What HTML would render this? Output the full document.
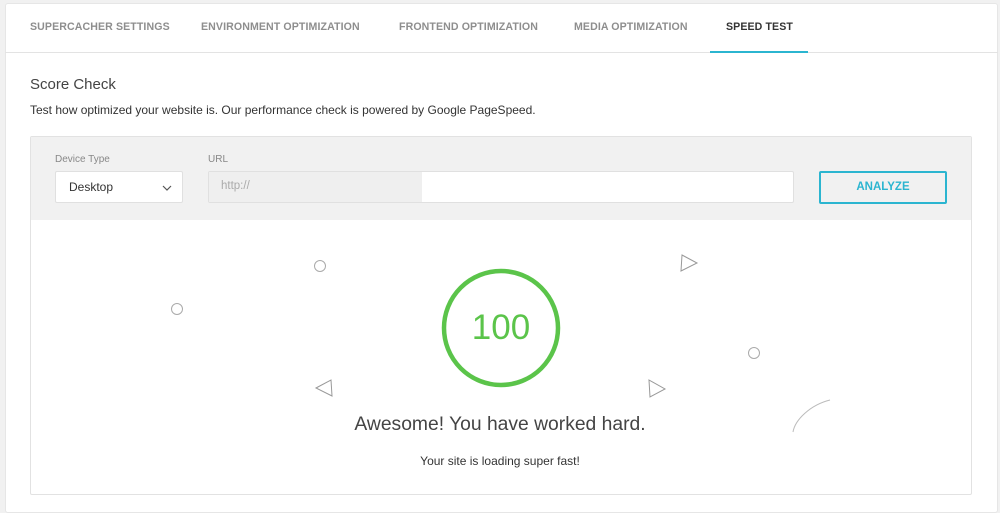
<!DOCTYPE html>
<html><head><meta charset="utf-8"><style>
*{margin:0;padding:0;box-sizing:border-box}
body{width:1000px;height:504px;background:#f1f1f1;font-family:"Liberation Sans",sans-serif;position:relative;overflow:hidden}
.card{position:absolute;left:5px;top:3px;width:993px;height:510px;background:#fff;border:1px solid #e6e6e6;border-radius:3px}
.tab{position:absolute;top:21px;font-size:10.6px;font-weight:bold;color:#8e8e8e;letter-spacing:.1px}
.line{position:absolute;left:5px;right:2px;top:52px;height:1px;background:#e3e3e3}
.ul{position:absolute;left:710px;width:98px;top:51px;height:2px;background:#2bb5d0}
.abs{position:absolute}
</style></head><body>
<div class="card"></div>
<div class="tab" style="left:30px">SUPERCACHER SETTINGS</div>
<div class="tab" style="left:201px">ENVIRONMENT OPTIMIZATION</div>
<div class="tab" style="left:399px">FRONTEND OPTIMIZATION</div>
<div class="tab" style="left:574px">MEDIA OPTIMIZATION</div>
<div class="tab" style="left:726px;color:#333">SPEED TEST</div>
<div class="line"></div><div class="ul"></div>
<div class="abs" style="left:30px;top:76px;font-size:15px;color:#444">Score Check</div>
<div class="abs" style="left:30px;top:103px;font-size:12px;color:#333">Test how optimized your website is. Our performance check is powered by Google PageSpeed.</div>
<div class="abs" style="left:30px;top:136px;width:942px;height:359px;border:1px solid #e2e2e2;border-radius:2px;background:#fff"></div>
<div class="abs" style="left:31px;top:137px;width:940px;height:83px;background:#f1f1f1"></div>
<div class="abs" style="left:55px;top:154px;font-size:10px;color:#888">Device Type</div>
<div class="abs" style="left:208px;top:154px;font-size:10px;color:#888">URL</div>
<div class="abs" style="left:55px;top:171px;width:128px;height:32px;background:#fff;border:1px solid #e0e0e0;border-radius:2px;font-size:12px;color:#333;padding:8px 13px">Desktop
<svg class="abs" style="left:106px;top:13px" width="10" height="6" viewBox="0 0 10 6"><path d="M1 1L5 5L9 1" fill="none" stroke="#555" stroke-width="1.2"/></svg></div>
<div class="abs" style="left:208px;top:171px;width:586px;height:32px;background:#fff;border:1px solid #e0e0e0;border-radius:2px"></div>
<div class="abs" style="left:209px;top:172px;width:213px;height:30px;background:#efefef"></div>
<div class="abs" style="left:221px;top:180px;font-size:11.5px;color:#aaa">http://</div>
<div class="abs" style="left:819px;top:171px;width:128px;height:33px;border:2px solid #2bb5d0;border-radius:2px;font-size:11.5px;color:#2bb5d0;text-align:center;line-height:29px;font-weight:bold">ANALYZE</div>
<svg class="abs" style="left:0;top:0" width="1000" height="504">
<circle cx="501" cy="328" r="57" fill="none" stroke="#5bc44a" stroke-width="4.5"/>
<circle cx="320" cy="266" r="5.5" fill="none" stroke="#aaa" stroke-width="1"/>
<circle cx="177" cy="309" r="5.5" fill="none" stroke="#aaa" stroke-width="1"/>
<circle cx="754" cy="353" r="5.5" fill="none" stroke="#aaa" stroke-width="1"/>
<path d="M682 255L697 263L681 271Z" fill="none" stroke="#999" stroke-width="1"/>
<path d="M316 388L331 380L332 396Z" fill="none" stroke="#999" stroke-width="1"/>
<path d="M649 380L665 389L650 397Z" fill="none" stroke="#999" stroke-width="1"/>
<path d="M830 400C810 405 795 420 793 432" fill="none" stroke="#bbb" stroke-width="1"/>
</svg>
<div class="abs" style="left:441px;top:308px;width:120px;text-align:center;font-size:35px;color:#5bc44a;font-weight:300">100</div>
<div class="abs" style="left:300px;top:414px;width:400px;text-align:center;font-size:19.3px;color:#444">Awesome! You have worked hard.</div>
<div class="abs" style="left:300px;top:454px;width:400px;text-align:center;font-size:12px;color:#333">Your site is loading super fast!</div>
</body></html>
